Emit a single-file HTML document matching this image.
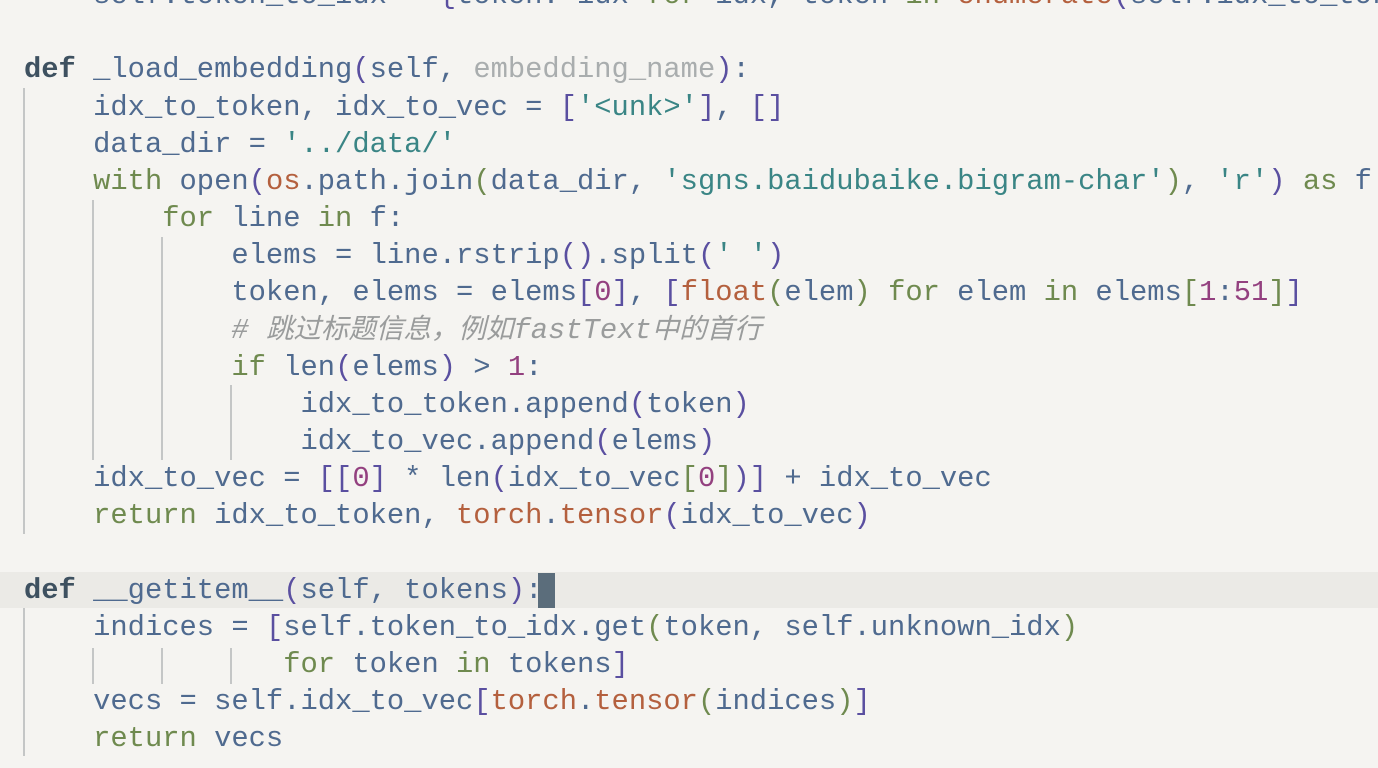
<!DOCTYPE html>
<html><head><meta charset="utf-8"><style>
html,body{margin:0;padding:0;background:#f5f4f1;width:1378px;height:768px;overflow:hidden;position:relative}
pre{position:absolute;left:24px;top:-23px;width:1354px;overflow:hidden;margin:0;font-family:"Liberation Mono","Noto Sans CJK SC",monospace;font-size:28.8px;line-height:37.17px;color:#4f6a8f;white-space:pre}
.k{color:#6f8a4f}.d{color:#3e5160;font-weight:bold}.s{color:#3a8585}.o{color:#b4603e}.n{color:#93407f}.b{color:#5a4fa0}.p{color:#a9adae}
.c{color:#9a9c9c;font-style:italic}.cj{font-size:27.5px;line-height:0}
.cl{display:inline-block;height:37.17px;vertical-align:top;line-height:37.17px}
.cur{position:absolute;left:0;top:572px;width:1378px;height:36px;background:#ebeae6}
.g{position:absolute;width:2px;background:#c4c6c6}
.caret{position:absolute;left:538px;top:573px;width:17px;height:35px;background:#5b6d7b}
</style></head><body>
<div class="cur"></div>
<div class="g" style="left:23px;top:88px;height:446px"></div>
<div class="g" style="left:92px;top:200px;height:260px"></div>
<div class="g" style="left:161px;top:237px;height:223px"></div>
<div class="g" style="left:230px;top:385px;height:75px"></div>
<div class="g" style="left:23px;top:608px;height:148px"></div>
<div class="g" style="left:92px;top:648px;height:36px"></div>
<div class="g" style="left:161px;top:648px;height:36px"></div>
<div class="g" style="left:230px;top:648px;height:36px"></div>
<div class="caret"></div>
<pre>    self.token_to_idx = <span class="b">{</span>token: idx <span class="k">for</span> idx, token <span class="k">in</span> <span class="o">enumerate</span><span class="b">(</span>self.idx_to_token<span class="b">)}</span>

<span class="d">def</span> _load_embedding<span class="b">(</span>self, <span class="p">embedding_name</span><span class="b">)</span>:
    idx_to_token, idx_to_vec = <span class="b">[</span><span class="s">'&lt;unk&gt;'</span><span class="b">]</span>, <span class="b">[]</span>
    data_dir = <span class="s">'../data/'</span>
    <span class="k">with</span> open<span class="b">(</span><span class="o">os</span>.path.join<span class="k">(</span>data_dir, <span class="s">'sgns.baidubaike.bigram-char'</span><span class="k">)</span>, <span class="s">'r'</span><span class="b">)</span> <span class="k">as</span> f:
        <span class="k">for</span> line <span class="k">in</span> f:
            elems = line.rstrip<span class="b">()</span>.split<span class="b">(</span><span class="s">' '</span><span class="b">)</span>
            token, elems = elems<span class="b">[</span><span class="n">0</span><span class="b">]</span>, <span class="b">[</span><span class="o">float</span><span class="k">(</span>elem<span class="k">)</span> <span class="k">for</span> elem <span class="k">in</span> elems<span class="k">[</span><span class="n">1</span>:<span class="n">51</span><span class="k">]</span><span class="b">]</span>
            <span class="c cl"># <span class="cj">跳过标题信息，例如</span>fastText<span class="cj">中的首行</span></span>
            <span class="k">if</span> len<span class="b">(</span>elems<span class="b">)</span> &gt; <span class="n">1</span>:
                idx_to_token.append<span class="b">(</span>token<span class="b">)</span>
                idx_to_vec.append<span class="b">(</span>elems<span class="b">)</span>
    idx_to_vec = <span class="b">[[</span><span class="n">0</span><span class="b">]</span> * len<span class="b">(</span>idx_to_vec<span class="k">[</span><span class="n">0</span><span class="k">]</span><span class="b">)]</span> + idx_to_vec
    <span class="k">return</span> idx_to_token, <span class="o">torch</span>.<span class="o">tensor</span><span class="b">(</span>idx_to_vec<span class="b">)</span>

<span class="d">def</span> __getitem__<span class="b">(</span>self, tokens<span class="b">)</span>:
    indices = <span class="b">[</span>self.token_to_idx.get<span class="k">(</span>token, self.unknown_idx<span class="k">)</span>
               <span class="k">for</span> token <span class="k">in</span> tokens<span class="b">]</span>
    vecs = self.idx_to_vec<span class="b">[</span><span class="o">torch</span>.<span class="o">tensor</span><span class="k">(</span>indices<span class="k">)</span><span class="b">]</span>
    <span class="k">return</span> vecs</pre>
</body></html>
